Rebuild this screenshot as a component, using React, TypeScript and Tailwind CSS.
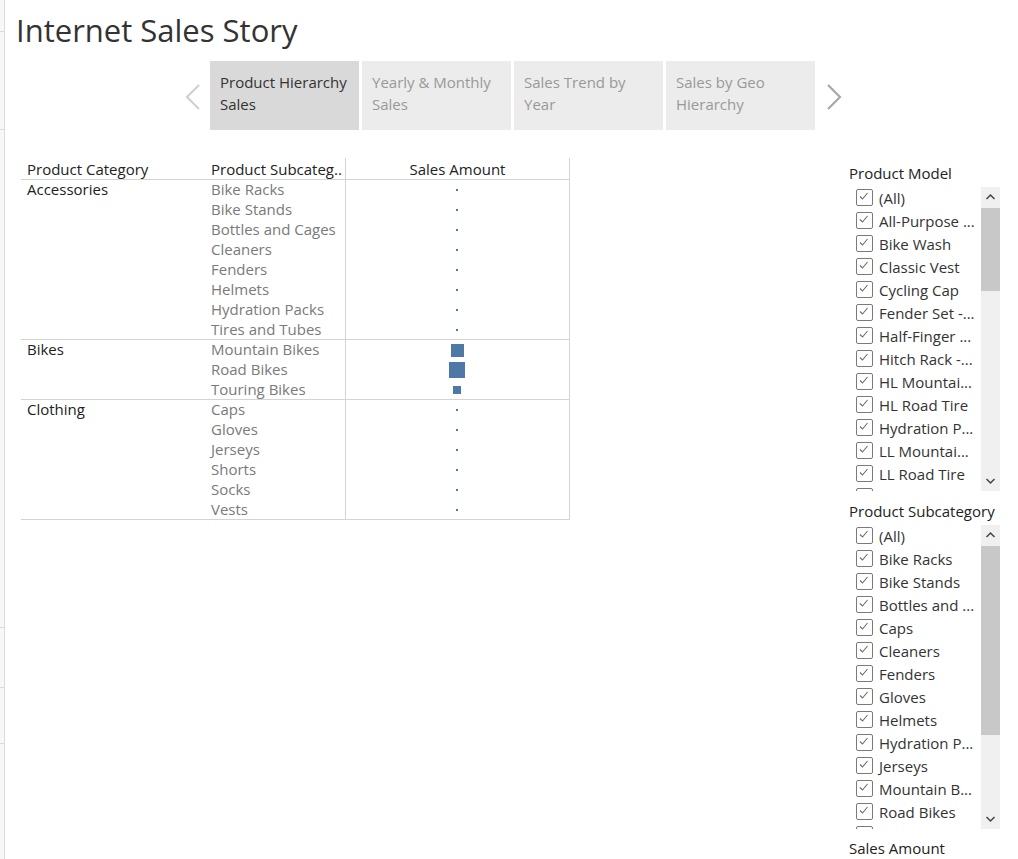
import React from 'react';

const font = { fontFamily: '"Open Sans", "Noto Sans", Arial, sans-serif' };

const groups = [
  {
    name: 'Accessories',
    h: 'h-[160px]',
    items: [
      ['Bike Racks', 2],
      ['Bike Stands', 2],
      ['Bottles and Cages', 2],
      ['Cleaners', 2],
      ['Fenders', 2],
      ['Helmets', 2],
      ['Hydration Packs', 2],
      ['Tires and Tubes', 2],
    ],
  },
  {
    name: 'Bikes',
    h: 'h-[60px]',
    items: [
      ['Mountain Bikes', 13],
      ['Road Bikes', 16],
      ['Touring Bikes', 8],
    ],
  },
  {
    name: 'Clothing',
    h: 'h-[120px]',
    items: [
      ['Caps', 2],
      ['Gloves', 2],
      ['Jerseys', 2],
      ['Shorts', 2],
      ['Socks', 2],
      ['Vests', 2],
    ],
  },
] as const;

const models = [
  '(All)',
  'All-Purpose ...',
  'Bike Wash',
  'Classic Vest',
  'Cycling Cap',
  'Fender Set -...',
  'Half-Finger ...',
  'Hitch Rack -...',
  'HL Mountai...',
  'HL Road Tire',
  'Hydration P...',
  'LL Mountai...',
  'LL Road Tire',
];

const subcats = [
  '(All)',
  'Bike Racks',
  'Bike Stands',
  'Bottles and ...',
  'Caps',
  'Cleaners',
  'Fenders',
  'Gloves',
  'Helmets',
  'Hydration P...',
  'Jerseys',
  'Mountain B...',
  'Road Bikes',
];

function Chevron({ dir, color }: { dir: 'left' | 'right'; color: string }) {
  return (
    <svg width="16" height="26" viewBox="0 0 16 26">
      <polyline
        points={dir === 'left' ? '14,1 2,13 14,25' : '2,1 14,13 2,25'}
        fill="none"
        stroke={color}
        strokeWidth="2.2"
      />
    </svg>
  );
}

function CheckBox() {
  return (
    <svg width="17" height="17" viewBox="0 0 17 17" className="flex-shrink-0">
      <rect x="0.5" y="0.5" width="16" height="16" rx="1.5" fill="white" stroke="#7a7a7a" />
      <polyline points="4,7.5 6.5,10 11.5,4" fill="none" stroke="#6b6b6b" strokeWidth="1.1" />
    </svg>
  );
}

function FilterList({ title, items, thumbTop, thumbHeight }: { title: string; items: string[]; thumbTop: number; thumbHeight: number }) {
  return (
    <div>
      <div className="h-[22px] text-[15px] leading-[22px] font-medium text-[#222]">{title}</div>
      <div className="mt-[3px] flex h-[304px] w-[151px] overflow-hidden">
        <div className="flex-1 overflow-hidden pt-[2px] pl-[7px]">
          {items.map((m, i) => (
            <div key={i} className="flex h-[23px] items-start gap-[6px]">
              <CheckBox />
              <span className="-mt-[1px] text-[15px] leading-[20px] whitespace-nowrap text-[#333]">{m}</span>
            </div>
          ))}
          <div className="flex h-[4px] items-start">
            <CheckBox />
          </div>
        </div>
        <div className="relative w-[19px] bg-[#f0f0f0]">
          <svg width="19" height="20" viewBox="0 0 19 20" className="absolute top-0 left-0">
            <polyline points="5.5,12 9.5,8 13.5,12" fill="none" stroke="#444" strokeWidth="1.5" />
          </svg>
          <div className="absolute left-0 w-[19px] bg-[#c8c8c8]" style={{ top: thumbTop, height: thumbHeight }} />
          <svg width="19" height="20" viewBox="0 0 19 20" className="absolute bottom-0 left-0">
            <polyline points="5.5,8 9.5,12 13.5,8" fill="none" stroke="#444" strokeWidth="1.5" />
          </svg>
        </div>
      </div>
    </div>
  );
}

export default function App() {
  return (
    <div className="flex h-[859px] w-[1018px] overflow-hidden bg-white" style={font}>
      <div className="flex w-[5px] flex-col border-r border-[#dcdcdc] bg-[#f7f7f7]">
        <div className="h-[32px] border-b border-[#dcdcdc]" />
        <div className="h-[98px] border-b border-[#dcdcdc]" />
        <div className="h-[498px] border-b border-[#dcdcdc]" />
        <div className="h-[60px] border-b border-[#dcdcdc]" />
        <div className="h-[56px] border-b border-[#dcdcdc]" />
      </div>

      <div className="flex flex-1 flex-col">
        <div className="h-[61px] pl-[11px] pt-[8px] text-[31px] leading-[44px] text-[#333]">Internet Sales Story</div>

        <div className="flex h-[69px] items-center">
          <div className="ml-[180px] flex w-[25px] items-center pt-[2px]">
            <Chevron dir="left" color="#d0d0d0" />
          </div>
          <div className="flex h-full gap-[3px]">
            {[
              ['Product Hierarchy', 'Sales'],
              ['Yearly & Monthly', 'Sales'],
              ['Sales Trend by', 'Year'],
              ['Sales by Geo', 'Hierarchy'],
            ].map((t, i) => (
              <div
                key={i}
                className={`h-full w-[149px] pt-[10px] pl-[10px] text-[15px] leading-[22px] ${
                  i === 0 ? 'bg-[#d9d9d9] text-[#333]' : 'bg-[#ececec] text-[#999]'
                }`}
              >
                <div>{t[0]}</div>
                <div>{t[1]}</div>
              </div>
            ))}
          </div>
          <div className="ml-[11px] flex items-center pt-[2px]">
            <Chevron dir="right" color="#a8a8a8" />
          </div>
        </div>

        <div className="flex flex-1">
          <div className="ml-[16px] mt-[28px] w-[549px] self-start text-[15px] leading-[20px]">
            <div className="flex h-[22px] border-b border-[#d4d4d4] font-medium text-[#222]">
              <div className="w-[184px] pl-[6px] leading-[22px]">Product Category</div>
              <div className="w-[141px] border-r border-[#d4d4d4] pl-[6px] leading-[22px] whitespace-nowrap">Product Subcateg..</div>
              <div className="flex-1 border-r border-[#d4d4d4] text-center leading-[22px]">Sales Amount</div>
            </div>
            {groups.map((g) => (
              <div key={g.name} className={`flex ${g.h} border-b border-[#d4d4d4]`}>
                <div className="w-[184px] pl-[6px] font-medium text-[#222]">
                  <div className="relative -top-px">{g.name}</div>
                </div>
                <div className="w-[141px] border-r border-[#d4d4d4] pl-[6px] text-[#7a7a7a]">
                  <div className="relative -top-px">
                    {g.items.map(([n]) => (
                      <div key={n} className="h-[20px]">{n}</div>
                    ))}
                  </div>
                </div>
                <div className="flex-1 border-r border-[#d4d4d4]">
                  {g.items.map(([n, s]) => (
                    <div key={n} className="flex h-[20px] items-center justify-center pr-[1px]">
                      <div className="bg-[#4e79a7]" style={{ width: s, height: s }} />
                    </div>
                  ))}
                </div>
              </div>
            ))}
          </div>

          <div className="ml-auto mr-[18px] mt-[32px] flex w-[151px] flex-col">
            <FilterList title="Product Model" items={models} thumbTop={21} thumbHeight={83} />
            <div className="mt-[9px]">
              <FilterList title="Product Subcategory" items={subcats} thumbTop={21} thumbHeight={189} />
            </div>
            <div className="mt-[8px] h-[22px] text-[15px] leading-[22px] font-medium text-[#222]">Sales Amount</div>
          </div>
        </div>
      </div>
    </div>
  );
}
